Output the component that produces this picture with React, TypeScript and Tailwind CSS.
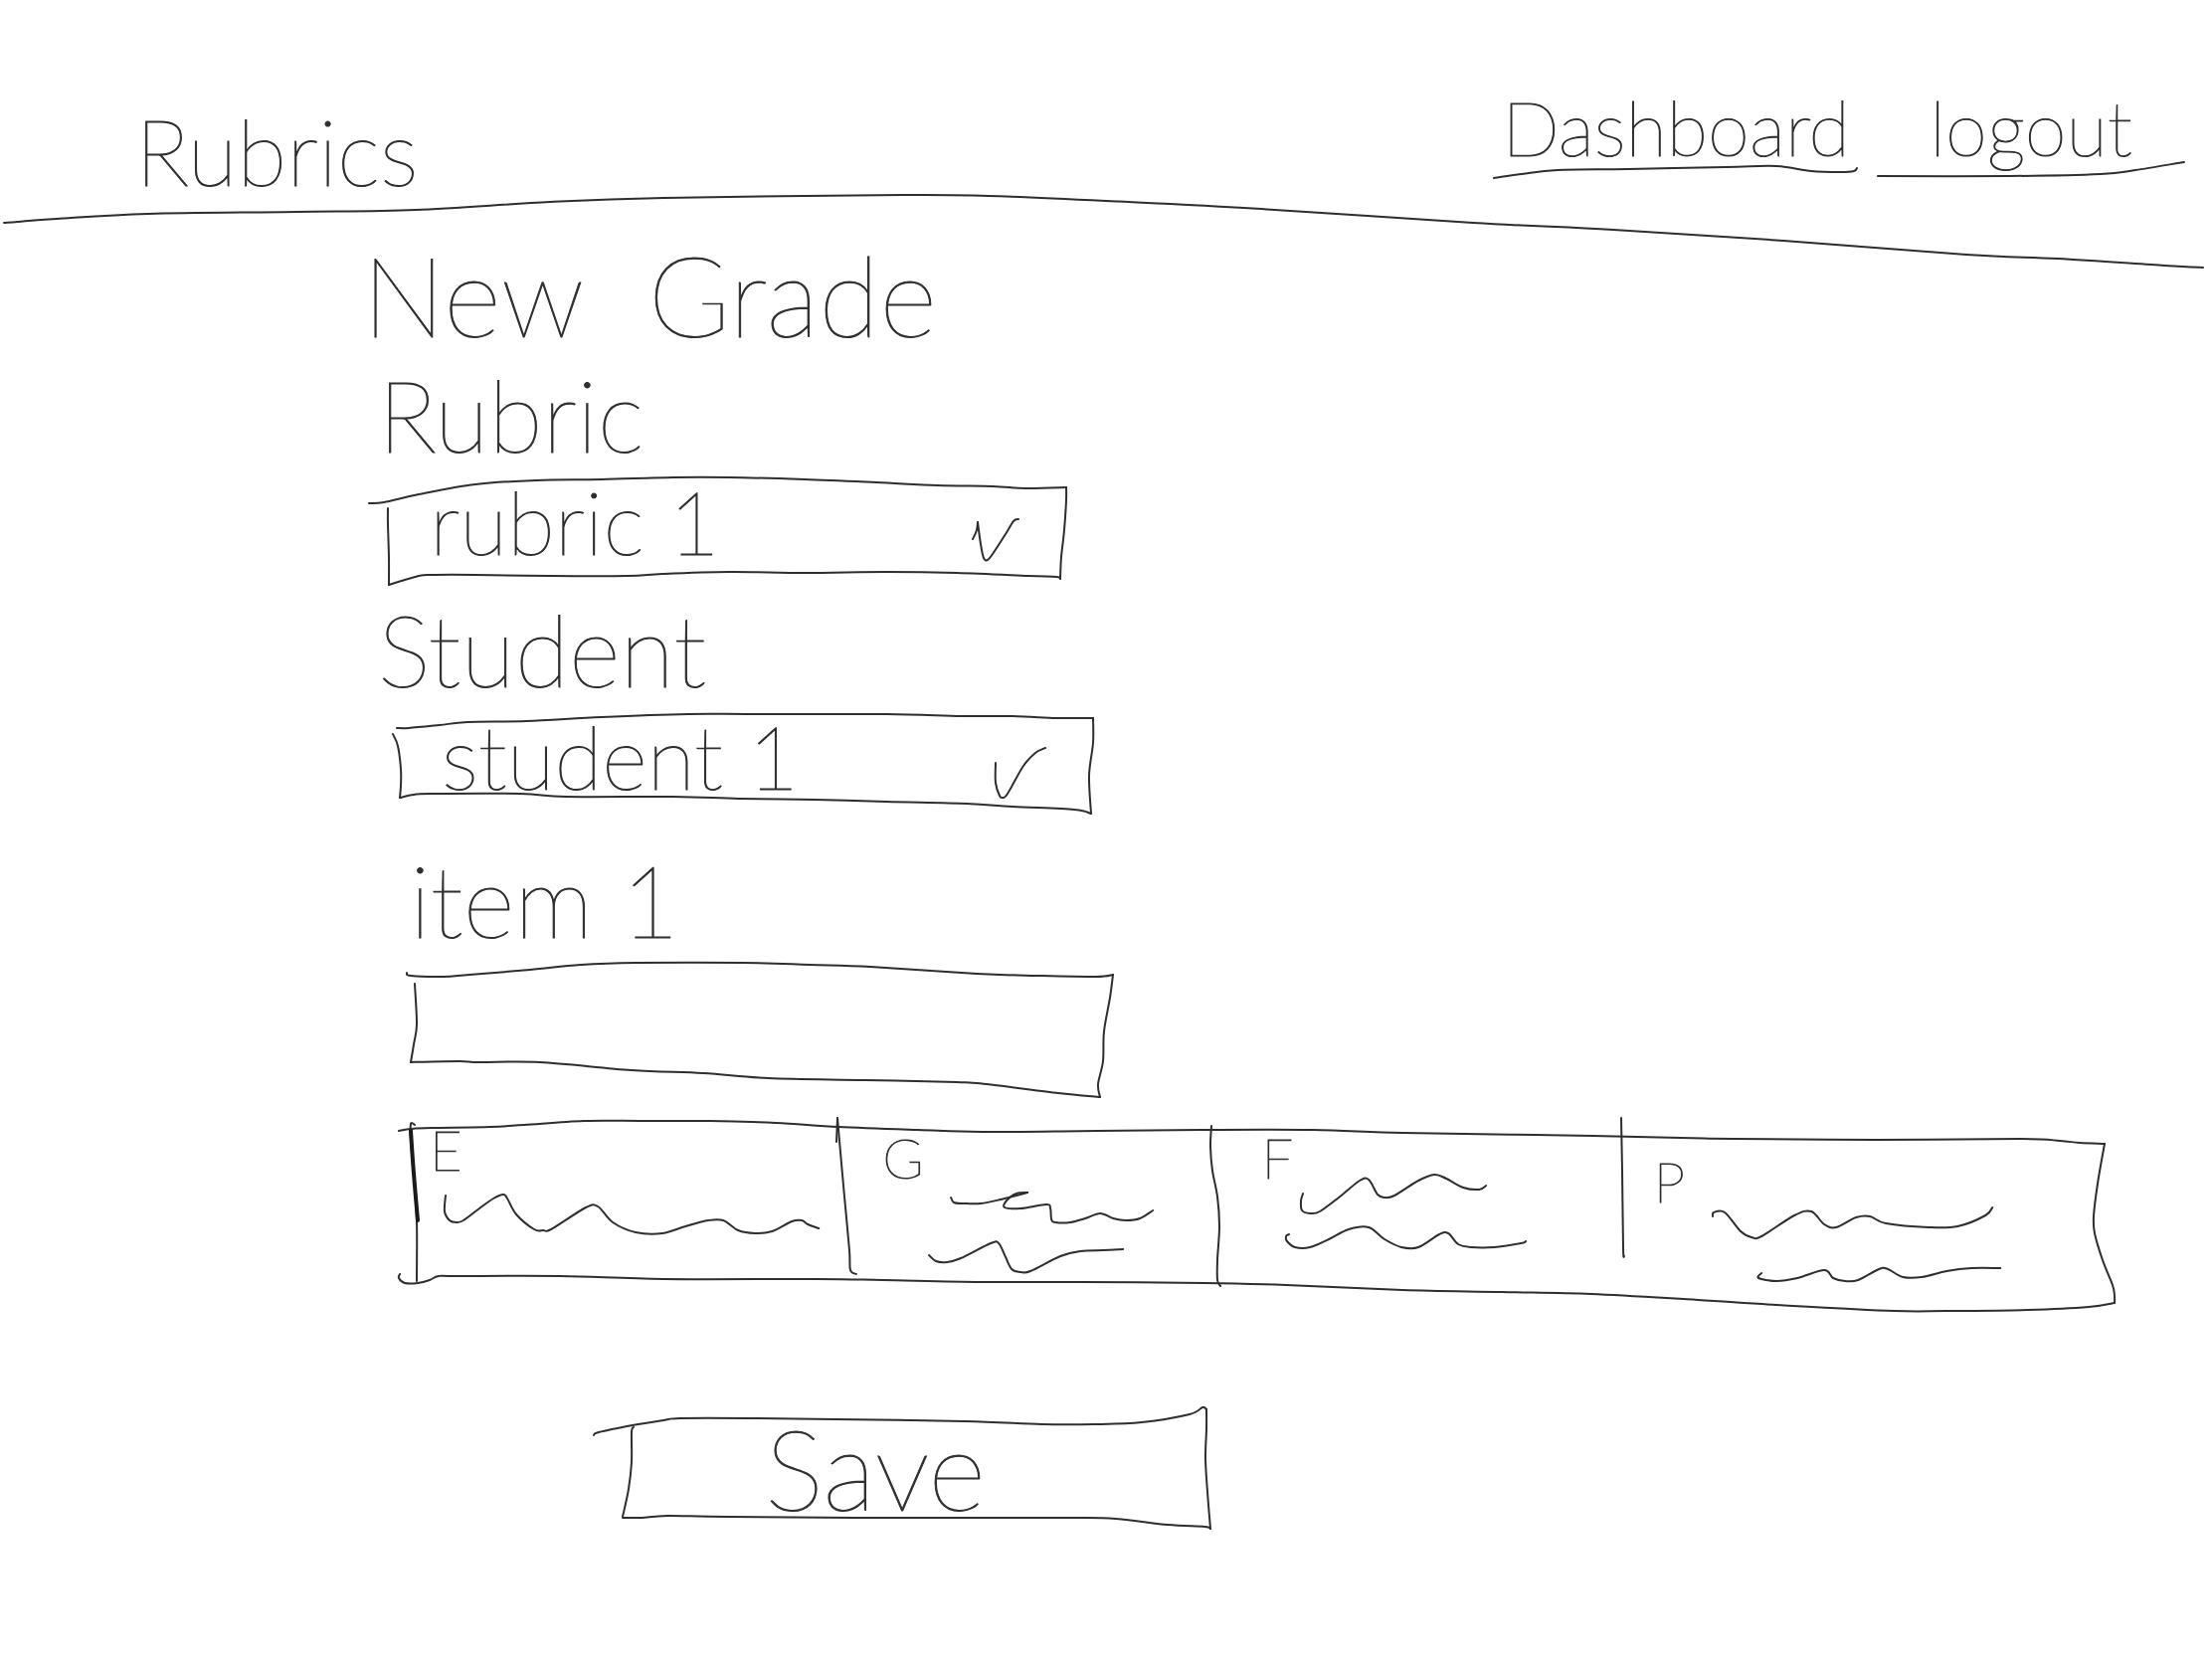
import React from "react";

type Point = [number, number];
type Line = Point[];

/* Smooth open curve through the given points (Catmull-Rom to Bezier). */
function curve(points: Line): string {
  let d = `M${points[0][0]} ${points[0][1]}`;
  for (let i = 0; i < points.length - 1; i++) {
    const p0 = points[Math.max(i - 1, 0)];
    const p1 = points[i];
    const p2 = points[i + 1];
    const p3 = points[Math.min(i + 2, points.length - 1)];
    const c = [
      p1[0] + (p2[0] - p0[0]) / 6,
      p1[1] + (p2[1] - p0[1]) / 6,
      p2[0] - (p3[0] - p1[0]) / 6,
      p2[1] - (p3[1] - p1[1]) / 6,
    ].map((n) => n.toFixed(1));
    d += `C${c[0]} ${c[1]} ${c[2]} ${c[3]} ${p2[0]} ${p2[1]}`;
  }
  return d;
}

/* Pen strokes laid over the parent box; the view is the parent's area on the sheet. */
function Ink({ view, lines, bold = [] }: { view: string; lines: Line[]; bold?: Line[] }) {
  return (
    <svg
      aria-hidden="true"
      viewBox={view}
      preserveAspectRatio="none"
      className="pointer-events-none absolute inset-0 h-full w-full overflow-visible fill-none stroke-[#2e2e2e] stroke-2"
      strokeLinecap="round"
      strokeLinejoin="round"
    >
      {lines.map((l, i) => (
        <path key={i} d={curve(l)} vectorEffect="non-scaling-stroke" />
      ))}
      {bold.map((l, i) => (
        <path key={i} d={curve(l)} vectorEffect="non-scaling-stroke" className="stroke-[#1a1a1a] stroke-4" />
      ))}
    </svg>
  );
}

const headerRule: Line[] = [
  [[4, 224], [18, 223], [57, 220], [149, 215], [298, 213], [418, 211], [553, 203], [667, 199], [908, 196], [993, 197], [1112, 202], [1268, 210], [1481, 224], [1622, 231], [1793, 242], [1977, 256], [2069, 260], [2176, 267], [2215, 269]],
];

const dashboardLine: Line[] = [
  [[1502, 179], [1530, 175], [1566, 171], [1637, 170], [1736, 168], [1786, 167], [1821, 172], [1850, 173], [1864, 172], [1867, 169]],
];

const logoutLine: Line[] = [[[1888, 177], [2020, 177], [2112, 175], [2147, 171], [2196, 163]]];

const rubricBox: Line[] = [
  [[371, 506], [386, 505], [421, 497], [478, 487], [539, 483], [605, 482], [677, 480], [733, 480], [809, 482], [881, 485], [942, 488], [998, 489], [1031, 491], [1072, 490]],
  [[1072, 490], [1072, 503], [1070, 533], [1067, 560], [1066, 582]],
  [[1066, 582], [1062, 580], [1034, 579], [962, 576], [891, 575], [809, 576], [733, 575], [666, 577], [631, 579], [554, 579], [478, 578], [437, 578], [421, 579], [391, 588]],
  [[391, 588], [391, 560], [390, 527], [390, 511]],
  [[978, 542], [982, 533], [983, 525]],
  [[983, 525], [986, 547], [989, 561], [993, 563], [998, 557], [1011, 537], [1019, 524], [1024, 522]],
];

const studentBox: Line[] = [
  [[399, 732], [411, 732], [442, 729], [470, 726], [529, 725], [605, 721], [692, 718], [758, 718], [891, 718], [967, 720], [1018, 720], [1062, 722], [1090, 722], [1099, 722]],
  [[1099, 722], [1099, 747], [1095, 780], [1097, 818]],
  [[1097, 818], [1080, 814], [1018, 811], [972, 808], [891, 806], [819, 804], [743, 803], [677, 801], [569, 801], [523, 798], [432, 798], [416, 799], [402, 802]],
  [[402, 802], [403, 790], [403, 773], [400, 750], [395, 738]],
  [[1001, 767], [1001, 787], [1005, 800], [1008, 802], [1013, 798], [1029, 770], [1041, 757], [1051, 752]],
];

const itemBox: Line[] = [
  [[409, 978], [413, 981], [446, 982], [472, 980], [533, 975], [584, 970], [640, 968], [747, 968], [814, 970], [875, 972], [982, 979], [1043, 981], [1102, 982], [1119, 980]],
  [[1119, 980], [1116, 1003], [1110, 1037], [1109, 1067], [1104, 1090], [1106, 1103]],
  [[1106, 1103], [1064, 1099], [992, 1090], [962, 1088], [870, 1086], [773, 1084], [707, 1079], [635, 1076], [543, 1068], [482, 1068], [462, 1067], [413, 1068]],
  [[413, 1068], [416, 1050], [419, 1030], [417, 989]],
];

const levelsFrame: Line[] = [
  [[401, 1137], [413, 1135], [433, 1134], [493, 1133], [527, 1131], [587, 1127], [647, 1127], [713, 1127], [780, 1129], [843, 1133], [923, 1136], [987, 1138], [1103, 1137], [1213, 1136], [1320, 1136], [1410, 1139], [1543, 1141], [1690, 1144], [1743, 1145], [1886, 1146], [2032, 1145], [2071, 1147], [2091, 1149], [2116, 1150]],
  [[2116, 1150], [2109, 1190], [2105, 1223], [2106, 1240], [2114, 1267], [2124, 1292], [2126, 1303], [2126, 1310]],
  [[2126, 1310], [2100, 1314], [2039, 1317], [1957, 1318], [1904, 1318], [1786, 1312], [1707, 1307], [1600, 1301], [1510, 1299], [1410, 1297], [1293, 1292], [1210, 1290], [1087, 1289], [987, 1289], [887, 1287], [820, 1286], [667, 1286], [563, 1283], [460, 1283], [441, 1283], [432, 1287], [420, 1290], [407, 1290], [401, 1285], [402, 1281]],
  [[417, 1131], [413, 1130], [413, 1147], [416, 1183], [419, 1227], [419, 1288]],
  [[842, 1124], [844, 1147], [849, 1203], [854, 1257], [855, 1277], [861, 1281]],
  [[842, 1124], [841, 1148]],
  [[1218, 1132], [1217, 1153], [1219, 1177], [1224, 1203], [1226, 1233], [1224, 1267], [1224, 1287], [1227, 1293]],
  [[1630, 1124], [1631, 1177], [1632, 1255], [1633, 1263]],
];

const levelsHeavy: Line[] = [[[413, 1137], [416, 1180], [420, 1227]]];

const saveBox: Line[] = [
  [[597, 1443], [602, 1440], [636, 1433], [667, 1428], [684, 1426], [753, 1426], [840, 1427], [970, 1429], [1048, 1432], [1100, 1432], [1148, 1430], [1196, 1422], [1209, 1415], [1213, 1417]],
  [[1213, 1417], [1213, 1437], [1212, 1467], [1214, 1500], [1217, 1537]],
  [[1217, 1537], [1211, 1535], [1174, 1533], [1122, 1527], [1070, 1526], [884, 1526], [732, 1525], [671, 1524], [645, 1526], [626, 1526]],
  [[626, 1525], [632, 1497], [635, 1470], [635, 1440], [637, 1435]],
];

const levels: { name: string; view: string; pad: string; notes: Line[] }[] = [
  {
    name: "E",
    view: "413 1132 435 168",
    pad: "pl-5",
    notes: [
      [[449, 1202], [448, 1218], [453, 1227], [460, 1229], [467, 1227], [483, 1215], [497, 1205], [507, 1201], [511, 1205], [520, 1221], [538, 1236], [547, 1237], [555, 1236], [590, 1214], [602, 1213], [617, 1229], [640, 1239], [667, 1240], [690, 1233], [713, 1227], [728, 1227], [743, 1237], [760, 1240], [777, 1238], [797, 1228], [807, 1227], [813, 1231], [824, 1235]],
    ],
  },
  {
    name: "G",
    view: "848 1132 373 168",
    pad: "pl-10 pt-2",
    notes: [
      [[957, 1204], [960, 1209], [970, 1210], [987, 1210], [1007, 1206], [1034, 1199]],
      [[1034, 1199], [1023, 1200], [1013, 1207], [1011, 1214], [1027, 1215], [1053, 1211], [1057, 1215], [1058, 1226], [1062, 1229], [1077, 1229], [1092, 1225], [1107, 1220], [1120, 1225], [1133, 1227], [1147, 1225], [1160, 1217]],
      [[935, 1262], [942, 1268], [953, 1269], [967, 1265], [997, 1250], [1005, 1250], [1012, 1264], [1018, 1276], [1027, 1279], [1037, 1278], [1067, 1263], [1087, 1258], [1110, 1257], [1130, 1256]],
    ],
  },
  {
    name: "F",
    view: "1221 1132 410 168",
    pad: "pl-12 pt-2",
    notes: [
      [[1311, 1200], [1309, 1207], [1310, 1217], [1318, 1220], [1328, 1218], [1347, 1204], [1368, 1187], [1377, 1186], [1386, 1201], [1393, 1204], [1403, 1202], [1427, 1187], [1443, 1181], [1455, 1185], [1472, 1194], [1488, 1196], [1495, 1192]],
      [[1297, 1241], [1294, 1243], [1295, 1248], [1303, 1254], [1318, 1254], [1337, 1246], [1357, 1236], [1377, 1234], [1393, 1246], [1410, 1254], [1427, 1254], [1448, 1241], [1457, 1240], [1467, 1251], [1480, 1254], [1503, 1254], [1530, 1250], [1535, 1248]],
    ],
  },
  {
    name: "P",
    view: "1631 1132 485 168",
    pad: "pl-8 pt-8",
    notes: [
      [[1722, 1223], [1723, 1219], [1734, 1219], [1750, 1238], [1761, 1244], [1771, 1243], [1804, 1222], [1821, 1218], [1834, 1231], [1846, 1234], [1866, 1224], [1880, 1223], [1896, 1230], [1939, 1234], [1968, 1233], [1996, 1222], [2003, 1214]],
      [[1771, 1280], [1768, 1285], [1786, 1288], [1807, 1285], [1834, 1277], [1843, 1285], [1855, 1288], [1868, 1287], [1889, 1276], [1898, 1276], [1913, 1284], [1932, 1284], [1957, 1278], [1982, 1275], [2011, 1275]],
    ],
  },
];

function Select({ id, option, view, box }: { id: string; option: string; view: string; box: Line[] }) {
  return (
    <div className="relative mt-3 h-24 w-full max-w-[680px]">
      <Ink view={view} lines={box} />
      <select
        id={id}
        className="h-20 w-full cursor-pointer appearance-none bg-transparent pl-11 text-[88px] leading-[80px] outline-none"
      >
        <option>{option}</option>
      </select>
    </div>
  );
}

const label = "block w-fit text-[100px] leading-[112px]";

export default function App() {
  return (
    <div className="min-h-screen bg-white font-['Lato',sans-serif] font-thin text-[#2e2e2e] [-webkit-text-stroke:1px_#2e2e2e]">
      <header className="relative flex h-[232px] items-start justify-between pl-34 pr-7">
        <Ink view="0 0 2224 232" lines={headerRule} />
        <div className="mt-24 text-[92px] leading-[112px]">Rubrics</div>
        <nav className="mt-20 flex gap-5 text-[76px] leading-[96px]">
          <a href="#dashboard" className="relative w-[366px] text-center">
            Dashboard
            <Ink view="1502 80 366 96" lines={dashboardLine} />
          </a>
          <a href="#logout" className="relative w-[308px] text-center">
            logout
            <Ink view="1888 80 308 96" lines={logoutLine} />
          </a>
        </nav>
      </header>

      <main className="pl-[364px] pr-[108px]">
        <h1 className="flex gap-16 text-[112px] leading-[128px]">
          <span>New</span> <span>Grade</span>
        </h1>

        <form onSubmit={(e) => e.preventDefault()}>
          <div className="ml-4">
            <label htmlFor="rubric" className={label}>Rubric</label>
            <div className="ml-2">
              <Select id="rubric" option="rubric 1" view="388 484 680 96" box={rubricBox} />
            </div>
          </div>

          <div className="ml-4 mt-4">
            <label htmlFor="student" className={label}>Student</label>
            <div className="ml-5">
              <Select id="student" option="student 1" view="400 720 680 96" box={studentBox} />
            </div>
          </div>

          <div className="ml-12 mt-8">
            <label htmlFor="item" className={label}>item 1</label>
            <div className="relative mt-3 h-28 w-full max-w-[704px]">
              <Ink view="412 972 704 112" lines={itemBox} />
              <input
                id="item"
                type="text"
                className="h-full w-full bg-transparent px-11 text-[88px] leading-[80px] outline-none"
              />
            </div>
          </div>

          <div className="relative ml-12 mt-12 grid grid-cols-[435fr_373fr_410fr_485fr]">
            <Ink view="412 1132 1704 168" lines={levelsFrame} bold={levelsHeavy} />
            {levels.map((l) => (
              <div key={l.name} className="relative h-42">
                <div className={`text-[56px] leading-[48px] ${l.pad}`}>{l.name}</div>
                <Ink view={l.view} lines={l.notes} />
              </div>
            ))}
          </div>

          <button type="submit" className="relative ml-66 mt-32 block h-24 w-[584px] cursor-pointer pr-20 text-[112px] leading-[80px]">
            Save
            <Ink view="628 1428 584 96" lines={saveBox} />
          </button>
        </form>
      </main>
    </div>
  );
}
